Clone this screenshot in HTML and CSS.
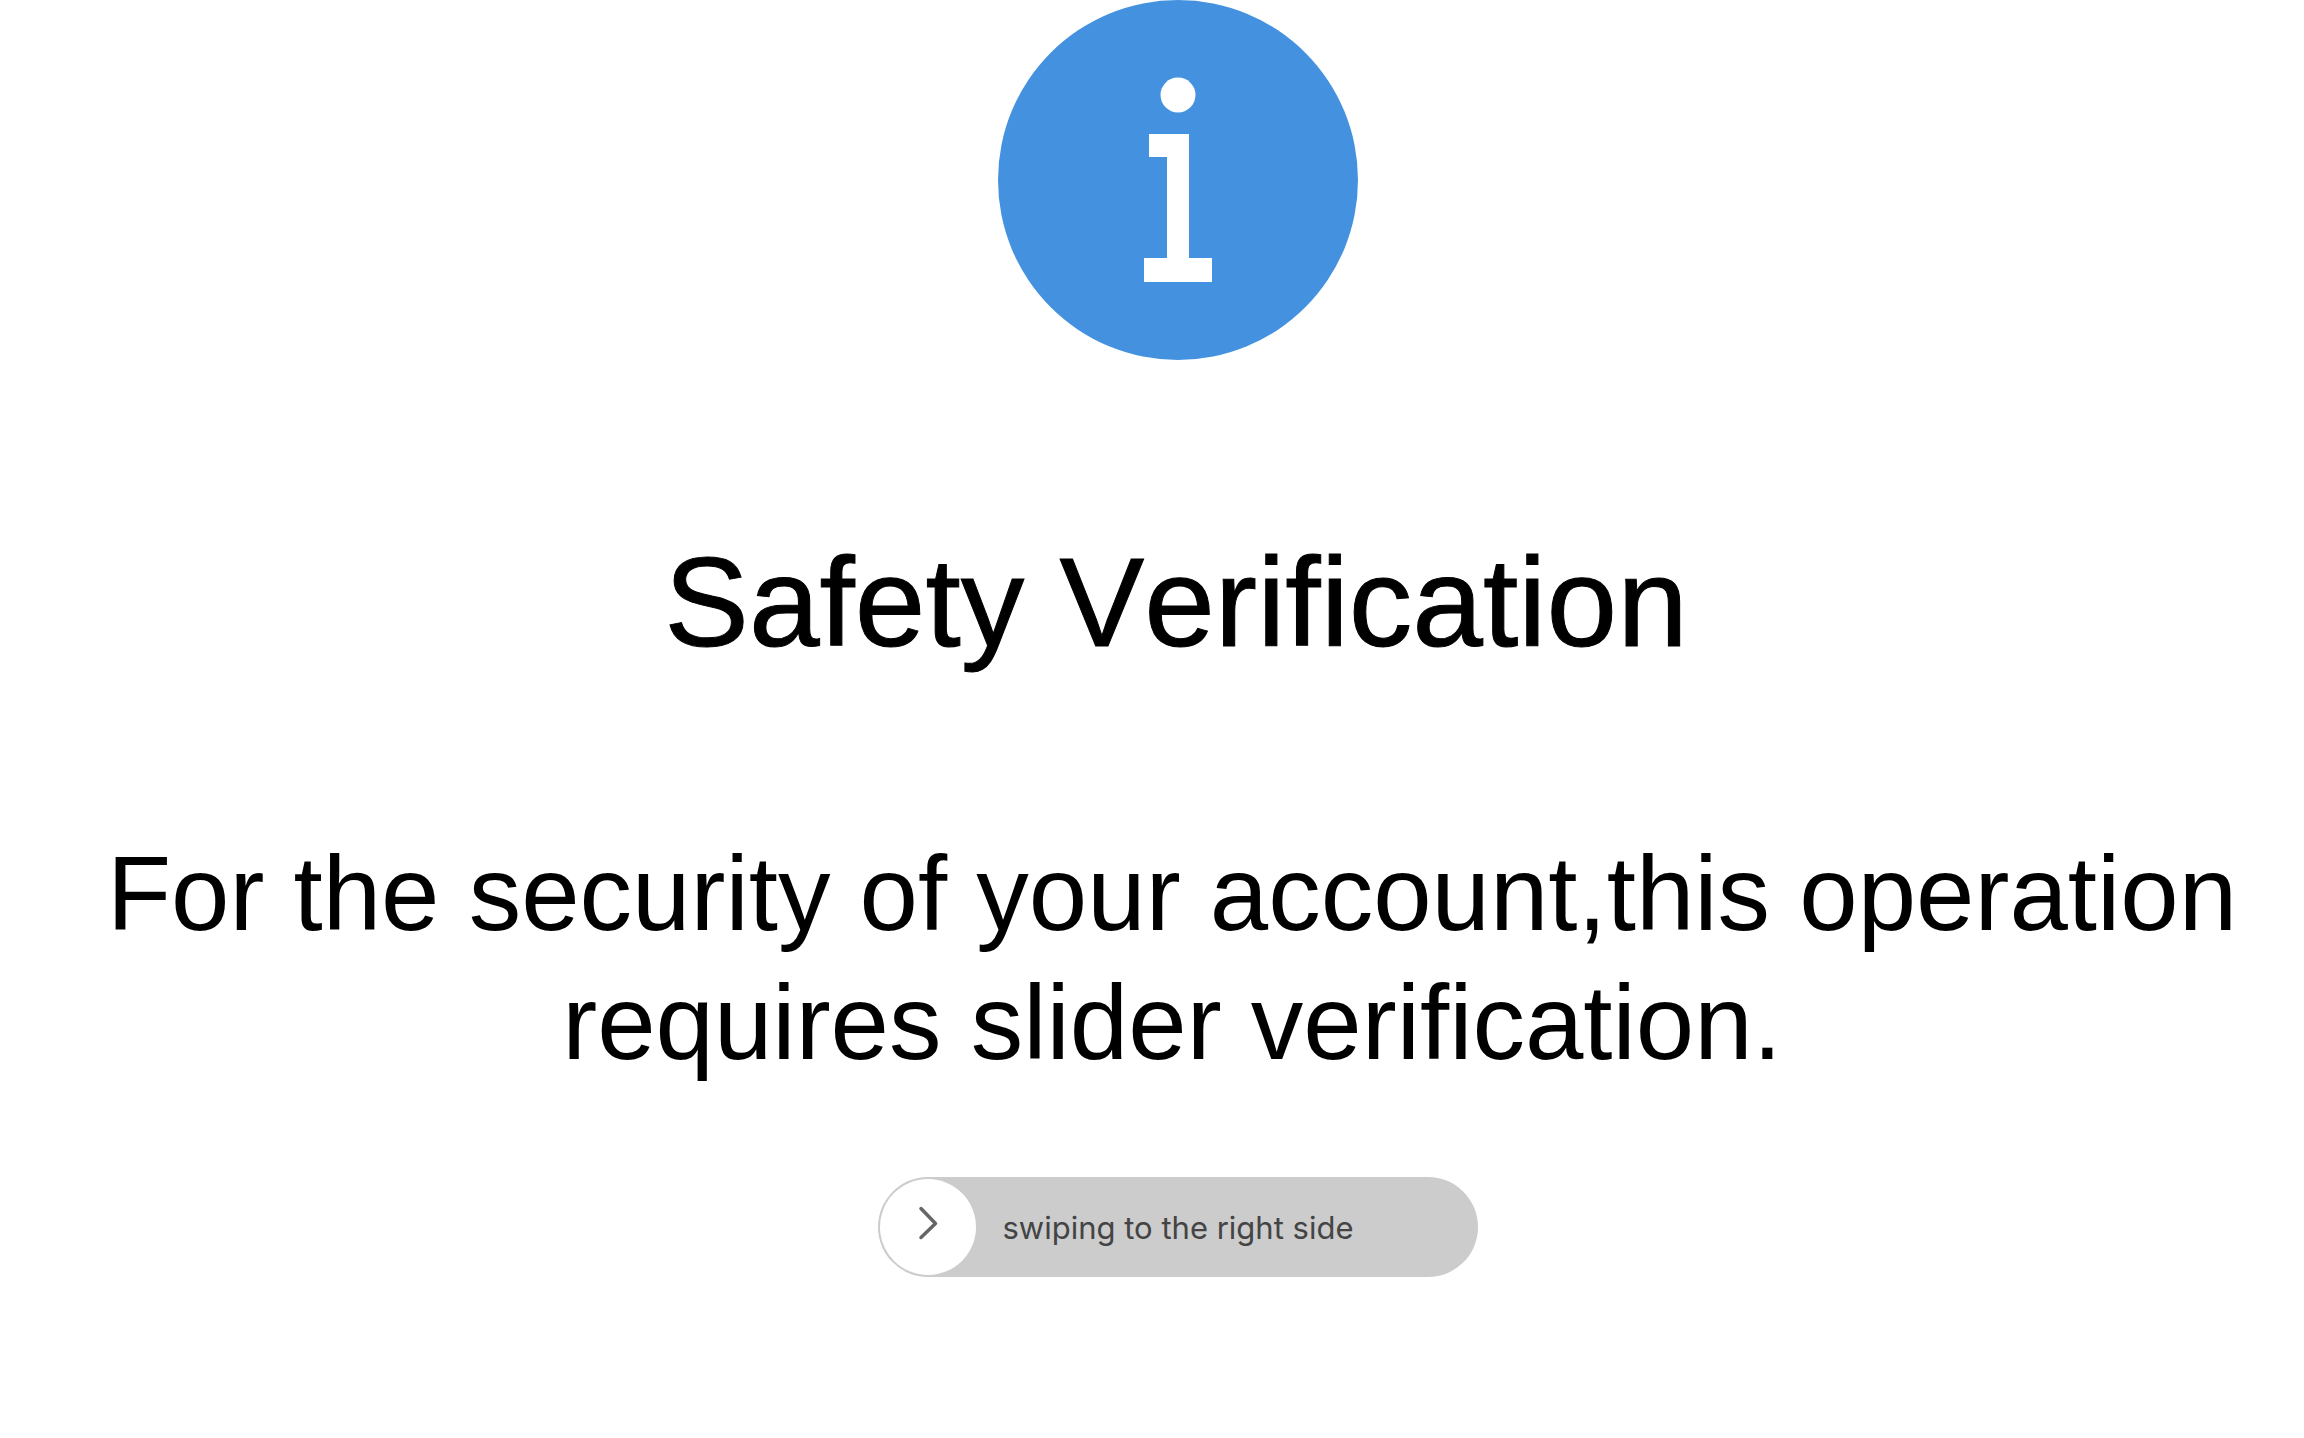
FILE: index.html
```html
<!DOCTYPE html>
<html lang="en">
<head>
<meta charset="UTF-8">
<meta name="viewport" content="width=device-width, initial-scale=1.0">
<title>Safety Verification</title>
<link rel="stylesheet" href="styles.css">
</head>
<body>
<main class="container">
    <svg class="info-icon" viewBox="0 0 360 360" aria-hidden="true">
        <circle cx="180" cy="180" r="180" fill="#4492df"/>
        <circle cx="180" cy="95" r="17.5" fill="#fff"/>
        <path d="M151 134H191V258H214V282H146V258H169V157H151Z" fill="#fff"/>
    </svg>

    <h1 class="title">Safety Verification</h1>
    <p class="message">For the security of your account,this operation requires slider verification.</p>

    <div class="slider">
        <input type="range" id="verify" class="slider-input" min="0" max="100" value="0">
        <label for="verify" class="slider-label">swiping to the right side</label>
        <svg class="slider-arrow" viewBox="0 0 96 96" aria-hidden="true">
            <path d="M41 29.5L55.5 44.5L41 58.5" fill="none" stroke="#666" stroke-width="3.5" stroke-linecap="round" stroke-linejoin="round"/>
        </svg>
    </div>
</main>

<script>
    const input = document.getElementById('verify');
    const slider = document.querySelector('.slider');
    const arrow = document.querySelector('.slider-arrow');

    // keep the arrow on the handle
    function moveArrow() {
        const travel = slider.clientWidth - arrow.clientWidth - 4;
        arrow.style.marginLeft = (2 + travel * input.value / 100) + 'px';
    }

    input.addEventListener('input', moveArrow);

    // go back to the start if not fully swiped
    input.addEventListener('change', function() {
        if (input.value < 100) {
            input.value = 0;
            moveArrow();
        }
    });
</script>
</body>
</html>
```

FILE: styles.css
```css
body {
    margin: 0;
    background-color: #fff;
    color: #000;
    font-family: "Liberation Sans", Arial, sans-serif;
}
.container {
    display: flex;
    flex-direction: column;
    align-items: center;
    padding-left: 52px;
    text-align: center;
}
.info-icon {
    width: 360px;
    height: 360px;
}
.title,
.message {
    font-weight: normal;
    font-kerning: none;
    font-variant-ligatures: none;
}
.title {
    margin: 170px 0 155px;
    padding-right: 4px;
    font-size: 127px;
    line-height: 144px;
    -webkit-text-stroke: 1px #000;
}
.message {
    margin: 0 0 90px;
    padding-right: 12px;
    font-size: 105px;
    line-height: 129px;
}
.slider {
    display: grid;
    align-items: center;
    width: 600px;
    max-width: 100%;
    height: 100px;
    border-radius: 50px;
    background-color: #ccc;
}
.slider-input,
.slider-label,
.slider-arrow {
    grid-area: 1 / 1;
}
.slider-input {
    -webkit-appearance: none;
    appearance: none;
    box-sizing: border-box;
    width: 100%;
    height: 100px;
    margin: 0;
    padding: 2px;
    border-radius: 50px;
    background: transparent;
    cursor: pointer;
}
.slider-input::-webkit-slider-thumb {
    -webkit-appearance: none;
    width: 96px;
    height: 96px;
    border-radius: 50%;
    background-color: #fff;
}
.slider-input::-moz-range-thumb {
    width: 96px;
    height: 96px;
    border: none;
    border-radius: 50%;
    background-color: #fff;
}
.slider-label {
    padding-top: 2px;
    color: #444;
    font-family: Inter, sans-serif;
    font-size: 31px;
    line-height: 40px;
    pointer-events: none;
}
.slider-arrow {
    width: 96px;
    height: 96px;
    margin-left: 2px;
    pointer-events: none;
}
```
